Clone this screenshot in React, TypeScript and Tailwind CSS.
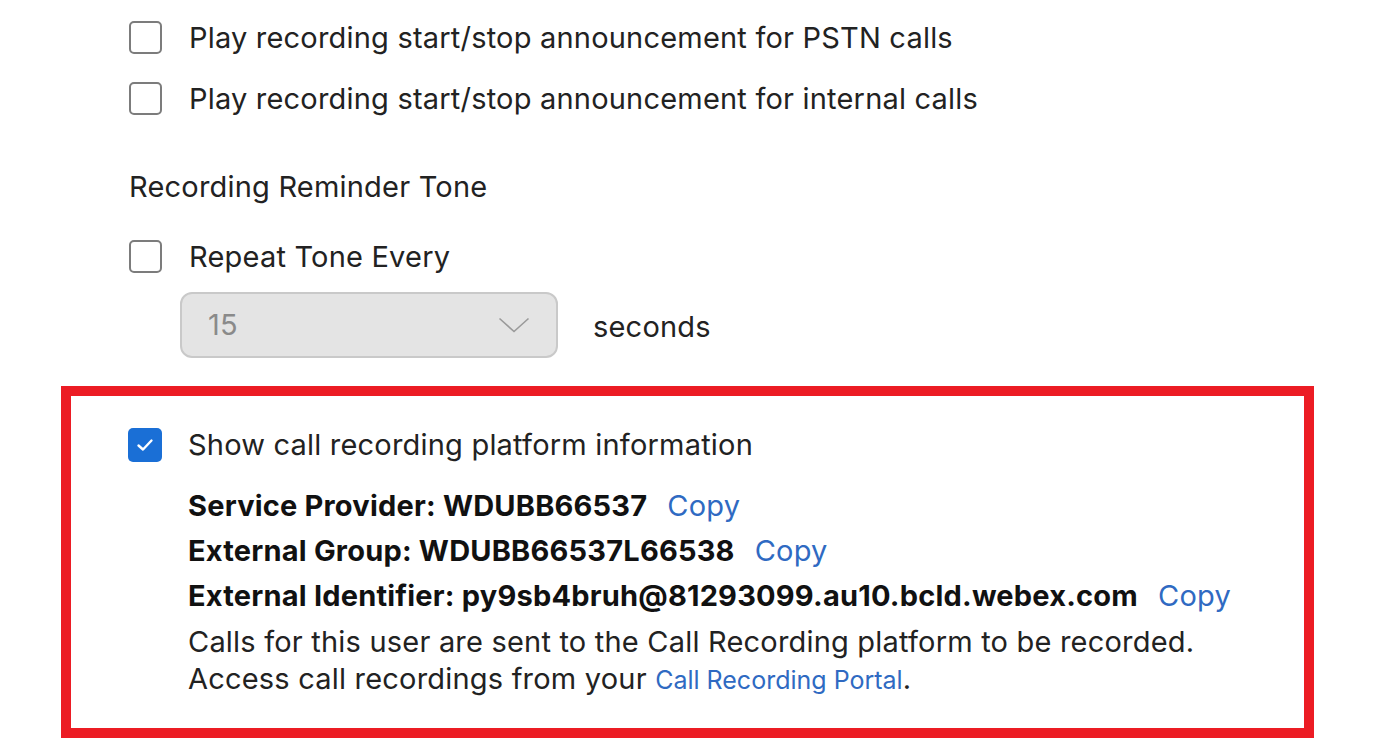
import React from "react";

function Box({ checked = false }: { checked?: boolean }) {
  if (checked) {
    return (
      <span className="flex h-[34px] w-[34px] shrink-0 items-center justify-center rounded-[5px] bg-[#1a6fd6]">
        <svg width="18" height="14" viewBox="0 0 18 14" fill="none">
          <path d="M2.5 7.5l4.5 4 8.5-9" stroke="white" strokeWidth="2.4" strokeLinecap="round" strokeLinejoin="round" />
        </svg>
      </span>
    );
  }
  return <span className="h-[33px] w-[33px] shrink-0 rounded-[5px] border-2 border-[#7c7c7c] bg-white" />;
}

function CopyLine({ label, value }: { label: string; value: string }) {
  return (
    <div className="flex h-[45px] items-center">
      <span className="font-bold text-[#111]">
        {label}: {value}
      </span>
      <span className="ml-[20px] text-[#2f6ac2]">Copy</span>
    </div>
  );
}

export default function App() {
  return (
    <div
      className="min-h-screen bg-white text-[29px] tracking-[0.2px] text-[#222]"
      style={{ fontFamily: "Inter, 'Noto Sans', sans-serif" }}
    >
      <div className="pl-[129px]">
        <div className="mt-[21px] flex h-[33px] items-center gap-[27px]">
          <Box />
          <span>Play recording start/stop announcement for PSTN calls</span>
        </div>
        <div className="mt-[28px] flex h-[33px] items-center gap-[27px]">
          <Box />
          <span>Play recording start/stop announcement for internal calls</span>
        </div>
        <div className="mt-[54px] h-[36px] leading-[36px]">Recording Reminder Tone</div>
        <div className="mt-[35px] flex h-[33px] items-center gap-[27px]">
          <Box />
          <span>Repeat Tone Every</span>
        </div>
        <div className="ml-[51px] mt-[19px] flex items-center gap-[35px]">
          <div className="flex h-[66px] w-[378px] items-center justify-between rounded-[12px] border-2 border-[#c9c9c9] bg-[#e4e4e4] pl-[26px] pr-[26px]">
            <span className="text-[#8a8a8a]">15</span>
            <svg width="32" height="16" viewBox="0 0 32 16" fill="none">
              <path d="M1.5 1.5l14.5 13 14.5-13" stroke="#9a9a9a" strokeWidth="1.6" />
            </svg>
          </div>
          <span className="mt-[4px]">seconds</span>
        </div>
      </div>
      <div className="ml-[61px] mt-[28px] w-[1253px] border-[10px] border-[#ec1c24] pb-[29px] pl-[57px] pt-[32px]">
        <div className="flex h-[34px] items-center gap-[26px]">
          <Box checked />
          <span>Show call recording platform information</span>
        </div>
        <div className="mt-[21px] pl-[60px]">
          <CopyLine label="Service Provider" value="WDUBB66537" />
          <CopyLine label="External Group" value="WDUBB66537L66538" />
          <CopyLine label="External Identifier" value="py9sb4bruh@81293099.au10.bcld.webex.com" />
          <p className="mt-[5px] leading-[37px]">
            Calls for this user are sent to the Call Recording platform to be recorded.
            <br />
            Access call recordings from your{" "}
            <span className="text-[25px] tracking-normal text-[#2f6ac2]">Call Recording Portal</span>.
          </p>
        </div>
      </div>
    </div>
  );
}
